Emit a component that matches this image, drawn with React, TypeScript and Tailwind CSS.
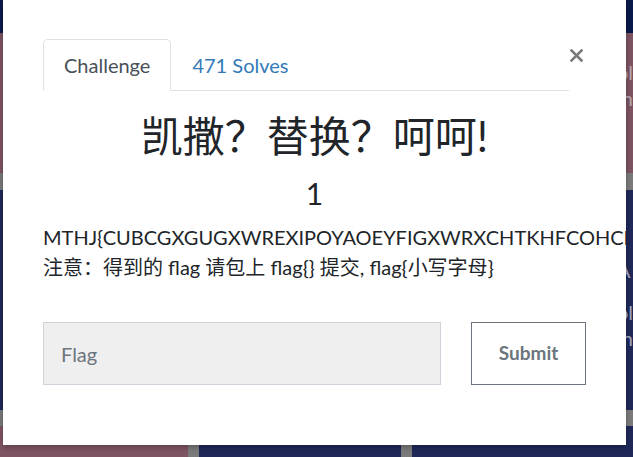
import React from "react";

// Challenge modal over the dimmed challenge board
const App = () => {
  return (
    <div className="relative w-[633px] h-[457px] overflow-hidden bg-[#1f2859] font-['Lato','Noto_Sans_CJK_SC',sans-serif]">
      {/* dimmed board behind the modal */}
      <div className="flex flex-col">
        <div className="h-[33px] bg-[#0a1a4b]" />
        <div className="flex h-[140px]">
          <div className="w-[188px] bg-[#7f5563]" />
          <div className="w-[11px] bg-[#7b7b7b]" />
          <div className="w-[202px] bg-[#7f5563]" />
          <div className="w-[11px] bg-[#7b7b7b]" />
          <div className="flex-1 bg-[#7f5563] pl-[215px] pt-[26px] text-[20px] leading-[26px] text-[#b9a9b3]">
            <div>ol</div>
            <div>in</div>
          </div>
        </div>
        <div className="h-[17px] bg-[#7b7b7b]" />
        <div className="flex h-[220px]">
          <div className="w-[188px] bg-[#1f2859]" />
          <div className="w-[11px] bg-[#7b7b7b]" />
          <div className="w-[202px] bg-[#1f2859]" />
          <div className="w-[11px] bg-[#7b7b7b]" />
          <div className="flex-1 bg-[#1f2859] pl-[215px] pt-[67px] text-[20px] leading-[26px] text-[#a3a8c0]">
            <div>A</div>
            <div className="mt-[16px]">ol</div>
            <div>in</div>
          </div>
        </div>
        <div className="h-[16px] bg-[#7b7b7b]" />
        <div className="flex h-[40px]">
          <div className="w-[188px] bg-[#7f5563]" />
          <div className="w-[11px] bg-[#7b7b7b]" />
          <div className="w-[202px] bg-[#1f2859]" />
          <div className="w-[11px] bg-[#7b7b7b]" />
          <div className="flex-1 bg-[#1f2859]" />
        </div>
      </div>

      {/* modal */}
      <div className="absolute left-[3px] top-0 w-[623px] h-[445px] overflow-hidden bg-white px-[40px] pt-[39px] text-[#212529] shadow-[0_2px_6px_rgba(0,0,0,0.3)]">
        <div className="flex items-start">
          <div className="flex flex-1 border-b border-[#dee2e6]">
            <div className="-mb-px rounded-t-[5px] border border-[#dee2e6] border-b-white bg-white px-[20px] py-[10px] text-[20px] leading-[30px] text-[#495057]">
              Challenge
            </div>
            <div className="-mb-px border border-transparent px-[20px] py-[10px] text-[20px] leading-[30px] text-[#337ab7]">
              471 Solves
            </div>
          </div>
          <div className="w-[17px] pl-[1px] pt-[10px]">
            <svg width="13" height="13" viewBox="0 0 13 13">
              <path d="M1.5 1.5L11.5 11.5M11.5 1.5L1.5 11.5" stroke="#7a7a7a" strokeWidth="2.6" strokeLinecap="square" />
            </svg>
          </div>
        </div>

        <h3 className="mt-[20px] text-center text-[42px] leading-[50px] font-normal">
          凯撒？替换？呵呵!
        </h3>
        <h4 className="mt-[14px] text-center text-[30px] leading-[36px]">1</h4>

        <div className="mt-[11px] text-[20px] leading-[30px]">
          <p className="whitespace-nowrap">
            MTHJ{"{"}CUBCGXGUGXWREXIPOYAOEYFIGXWRXCHTKHFCOHCFDUCGTXZOHIXOEOWMEHZO{"}"}
          </p>
          <p className="whitespace-nowrap">
            注意：得到的 flag 请包上 flag{"{}"} 提交, flag{"{"}小写字母{"}"}
          </p>
        </div>

        <div className="mt-[40px] flex gap-[30px]">
          <input
            placeholder="Flag"
            className="h-[63px] w-[398px] border border-[#ced4da] bg-[#efefef] px-[17px] text-[20px] text-[#495057] placeholder:text-[#6c757d] outline-none"
          />
          <button className="h-[63px] w-[115px] border border-[#6c757d] bg-white text-[19px] font-bold text-[#6c757d]">
            Submit
          </button>
        </div>
      </div>
    </div>
  );
};

export default App;
